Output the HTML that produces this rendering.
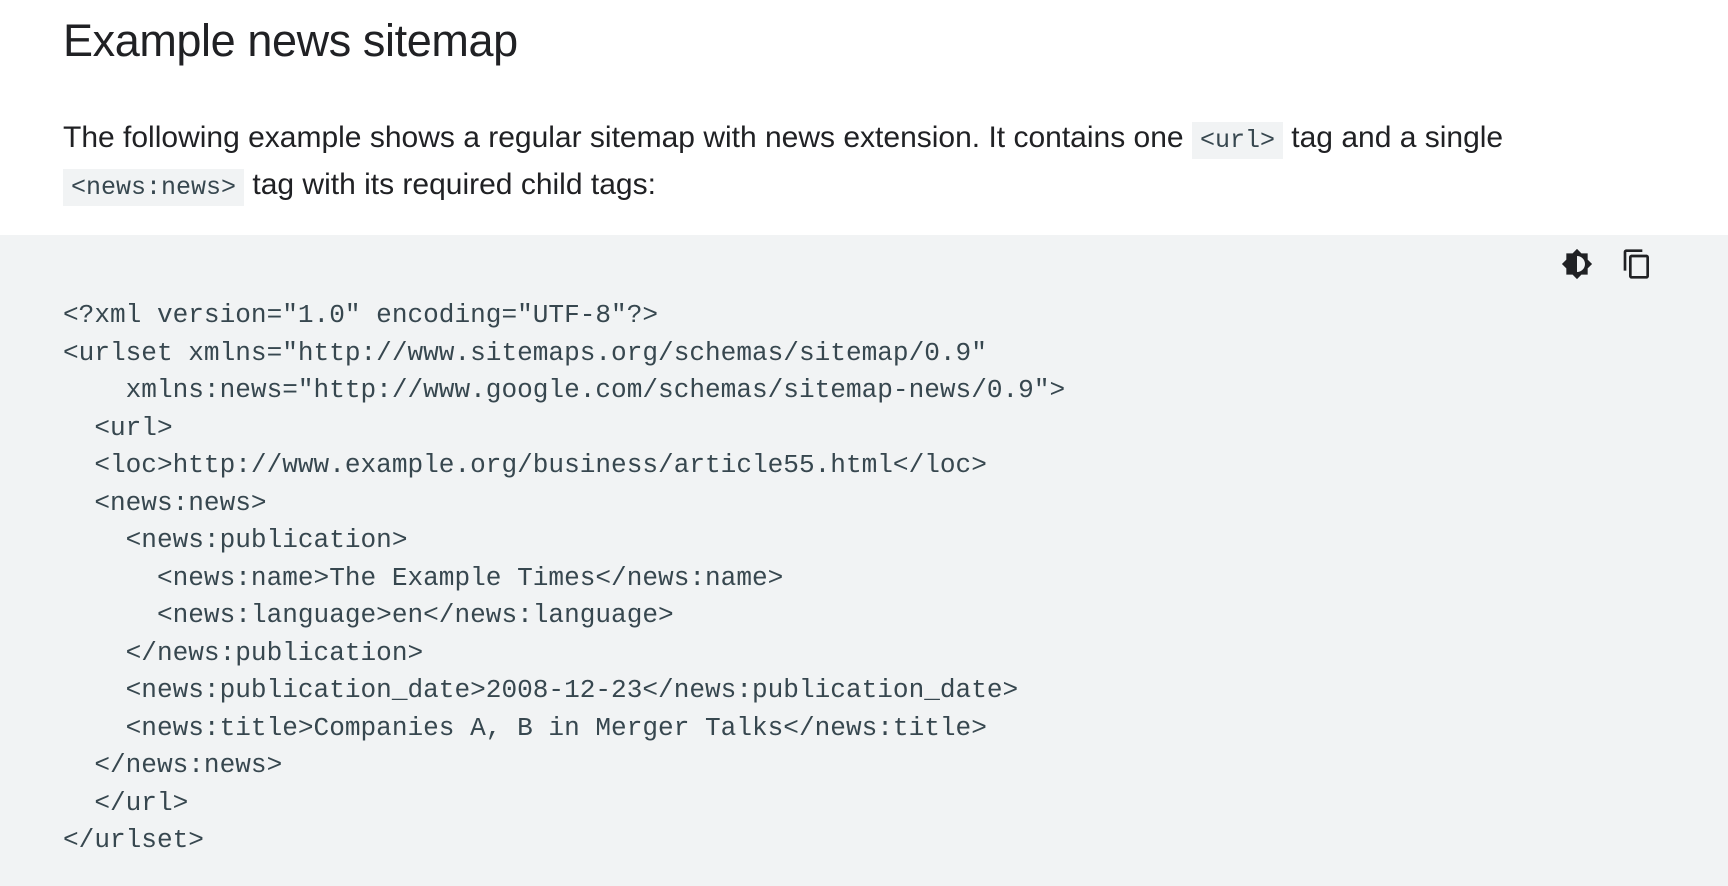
<!DOCTYPE html>
<html><head><meta charset="utf-8"><style>
body{margin:0;width:1728px;height:886px;overflow:hidden;background:#fff;font-family:"Liberation Sans",sans-serif;color:#202124}
h1{position:absolute;left:63px;top:13px;margin:0;font-weight:400;font-size:45px;letter-spacing:-0.4px;line-height:56px}
p{position:absolute;left:63px;top:116px;margin:0;font-size:30px;line-height:44px;width:1620px;letter-spacing:0}
p code{font-family:"Liberation Mono",monospace;font-size:25px;background:#f1f3f4;padding:4px 8px;color:#37474f;letter-spacing:0}
.code{position:absolute;left:0;top:235px;width:1728px;height:651px;background:#f1f3f4}
pre{position:absolute;left:63px;top:62px;margin:0;font-family:"Liberation Mono",monospace;font-size:26.1px;line-height:37.5px;color:#37474f}
.i{position:absolute;top:248px}
</style></head><body>
<h1>Example news sitemap</h1>
<p>The following example shows a regular sitemap with news extension. It contains one <code>&lt;url&gt;</code> tag and a single<br><code>&lt;news:news&gt;</code> tag with its required child tags:</p>
<div class="code"><pre>&lt;?xml version="1.0" encoding="UTF-8"?&gt;
&lt;urlset xmlns="http://www.sitemaps.org/schemas/sitemap/0.9"
    xmlns:news="http://www.google.com/schemas/sitemap-news/0.9"&gt;
  &lt;url&gt;
  &lt;loc&gt;http://www.example.org/business/article55.html&lt;/loc&gt;
  &lt;news:news&gt;
    &lt;news:publication&gt;
      &lt;news:name&gt;The Example Times&lt;/news:name&gt;
      &lt;news:language&gt;en&lt;/news:language&gt;
    &lt;/news:publication&gt;
    &lt;news:publication_date&gt;2008-12-23&lt;/news:publication_date&gt;
    &lt;news:title&gt;Companies A, B in Merger Talks&lt;/news:title&gt;
  &lt;/news:news&gt;
  &lt;/url&gt;
&lt;/urlset&gt;</pre></div>
<svg class="i" style="left:1561px" width="32" height="32" viewBox="0 0 24 24"><path fill="#202124" d="M20 8.69V4h-4.69L12 .69 8.69 4H4v4.69L.69 12 4 15.31V20h4.69L12 23.31 15.31 20H20v-4.69L23.31 12 20 8.69zM12 18V6c3.31 0 6 2.69 6 6s-2.69 6-6 6z"/></svg>
<svg class="i" style="left:1621px" width="32" height="32" viewBox="0 0 24 24"><path fill="#202124" d="M16 1H4c-1.1 0-2 .9-2 2v14h2V3h12V1zm3 4H8c-1.1 0-2 .9-2 2v14c0 1.1.9 2 2 2h11c1.1 0 2-.9 2-2V7c0-1.1-.9-2-2-2zm0 16H8V7h11v14z"/></svg>
</body></html>
